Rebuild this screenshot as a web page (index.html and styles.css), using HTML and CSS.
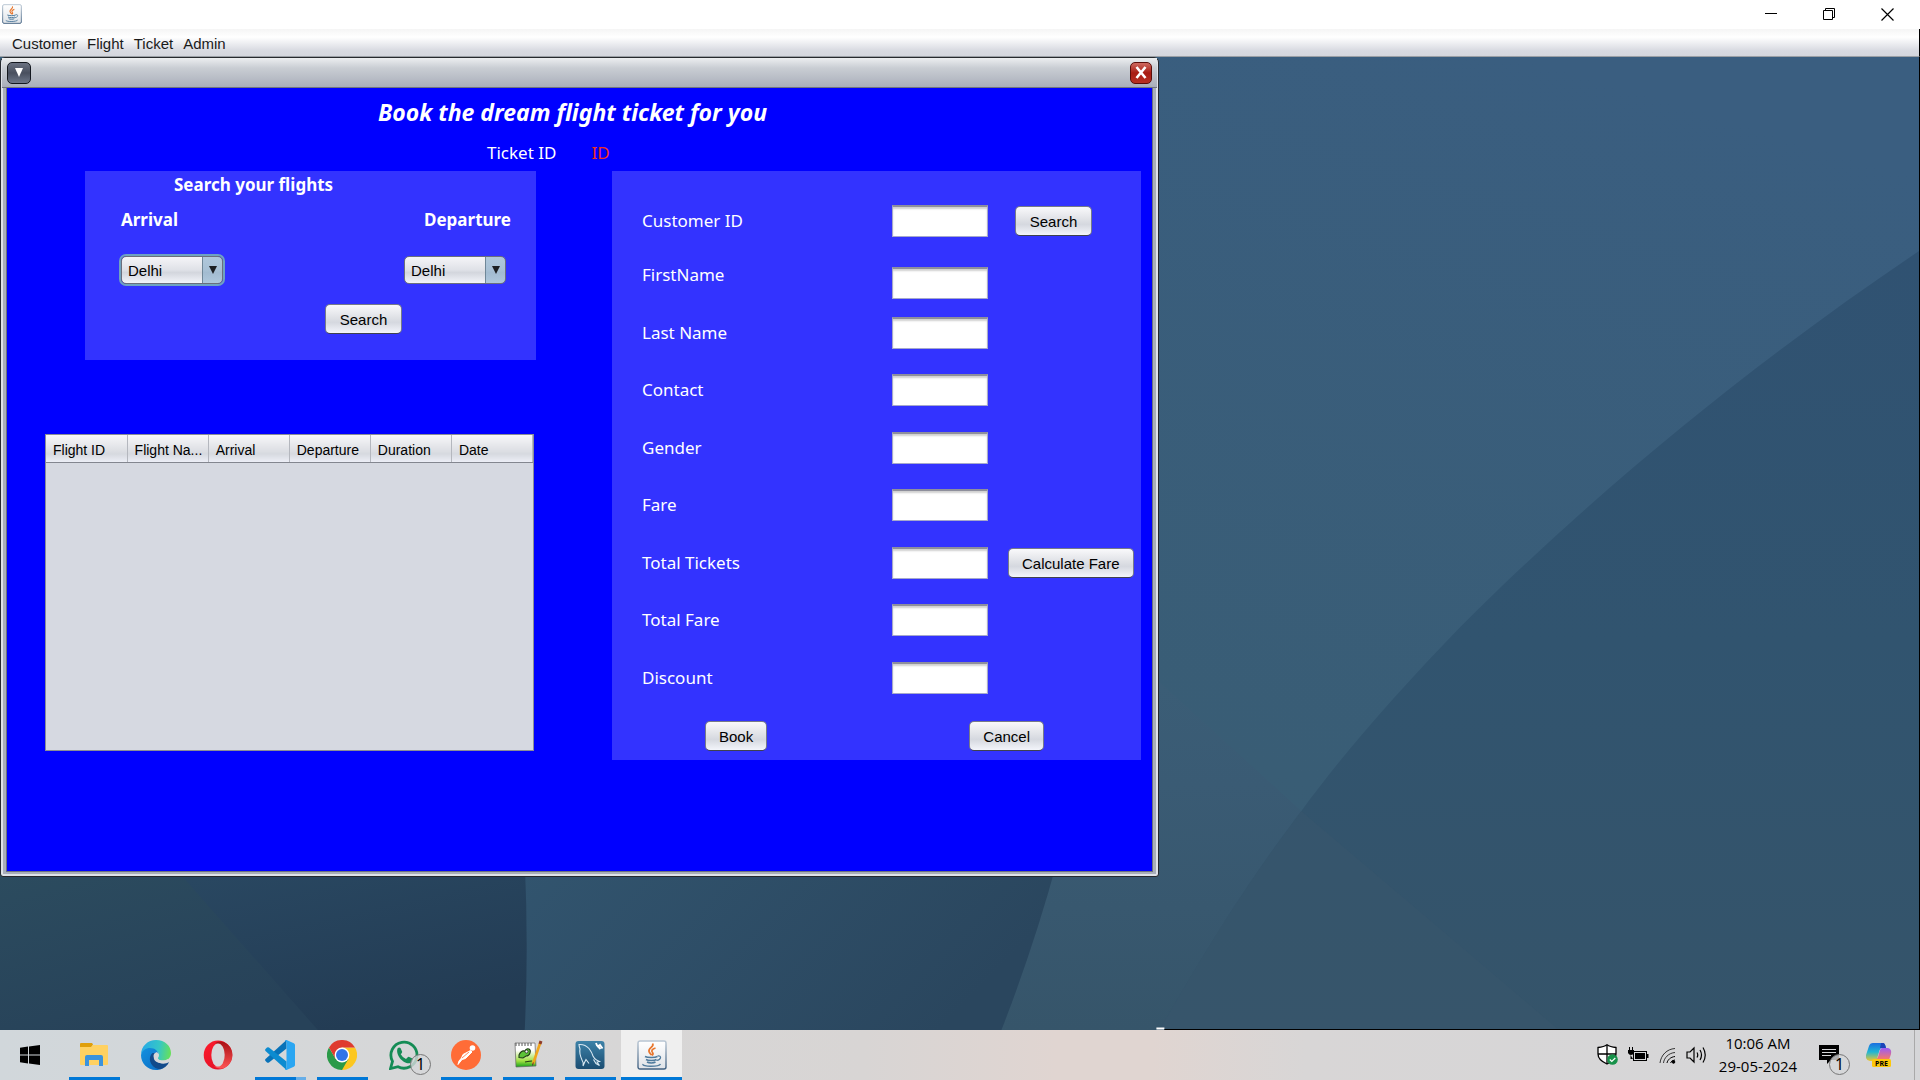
FILE: index.html
```html
<!DOCTYPE html>
<html lang="en">
<head>
<meta charset="utf-8">
<title>Flight booking</title>
<link rel="stylesheet" href="styles.css">
</head>
<body>
<svg class="defs" aria-hidden="true">
  <defs>
    <symbol id="java" viewBox="0 0 30 30">
      <linearGradient id="jg" x1="0" y1="0" x2="0" y2="1"><stop offset="0" stop-color="#b9c6d3"/><stop offset="1" stop-color="#3f5f80"/></linearGradient>
      <linearGradient id="jb" x1="0" y1="0" x2="0" y2="1"><stop offset="0" stop-color="#fff"/><stop offset="1" stop-color="#dfe3e8"/></linearGradient>
      <rect x="1" y="1" width="28" height="28" rx="2" fill="url(#jb)" stroke="url(#jg)" stroke-width="1.4"/>
      <path d="M15.500 3.500c2.500 3-4.500 4.500-3.500 8 .5 1.700 2 2.300 2.500 3.800M18.500 8c-3.500 1-4.500 3-3 4.500 1 1 .5 2-.5 3" fill="none" stroke="#e8762d" stroke-width="1.700"/>
      <g fill="none" stroke="#4f7b9d" stroke-width="1.500">
        <path d="M8 16.500c2.500 1.300 10 1.300 12.500 0M9 19.500c2 1.300 8.500 1.300 10.500 0M10 22c2 1.200 6.500 1.200 8.500 0"/>
        <path d="M20.500 16c4.500-1 4 4-1 4.500" stroke-width="1.200"/>
        <path d="M6 24c-1.500 3 16 3 17.500 0" stroke-width="1.400"/>
      </g>
    </symbol>
  </defs>
</svg>

<header class="titlebar">
  <svg class="app-icon" viewBox="0 0 30 30"><use href="#java"/></svg>
  <div class="window-controls">
    <button type="button" aria-label="Minimize"><svg width="13" height="13" viewBox="0 0 13 13"><path d="M0 5.500h12" stroke="#000"/></svg></button>
    <button type="button" aria-label="Restore"><svg width="13" height="13" viewBox="0 0 13 13"><path d="M.5 2.500h9v9h-9zM2.500 2.500v-2h9v9h-2" fill="none" stroke="#000"/></svg></button>
    <button type="button" aria-label="Close"><svg width="13" height="13" viewBox="0 0 13 13"><path d="M.5.5l12 12M12.500.5l-12 12" stroke="#000" stroke-width="1.200"/></svg></button>
  </div>
</header>

<nav class="menubar" aria-label="Application">
  <button type="button">Customer</button>
  <button type="button">Flight</button>
  <button type="button">Ticket</button>
  <button type="button">Admin</button>
</nav>

<main class="desktop">
  <svg class="wallpaper" viewBox="0 57 1920 973" preserveAspectRatio="none" aria-hidden="true">
    <defs>
      <linearGradient id="w1" x1=".8" y1="0" x2=".2" y2="1"><stop offset="0" stop-color="#3a5e80"/><stop offset=".6" stop-color="#395d75"/><stop offset="1" stop-color="#395b6d"/></linearGradient>
      <linearGradient id="w2" x1="0" y1="0" x2="0" y2="1"><stop offset="0" stop-color="#305272"/><stop offset=".5" stop-color="#31546f"/><stop offset="1" stop-color="#35546a"/></linearGradient>
      <linearGradient id="w3" x1="0" y1="0" x2="0" y2="1"><stop offset="0" stop-color="#3c6079"/><stop offset=".5" stop-color="#3a5b74"/><stop offset="1" stop-color="#36556a"/></linearGradient>
      <linearGradient id="w4" x1="0" y1="0" x2="1" y2=".3"><stop offset="0" stop-color="#32556f"/><stop offset="1" stop-color="#2a465e"/></linearGradient>
      <linearGradient id="w5" x1="0" y1="0" x2=".5" y2="1"><stop offset="0" stop-color="#2a4963"/><stop offset="1" stop-color="#233c54"/></linearGradient>
      <linearGradient id="w6" x1="0" y1="0" x2=".5" y2="1"><stop offset="0" stop-color="#2c4c5f"/><stop offset="1" stop-color="#274259"/></linearGradient>
    </defs>
    <path d="M0 57H1920V1030H0z" fill="url(#w1)"/>
    <path d="M1000 540L1160 682 1302 811 1560 1030H900z" fill="url(#w3)"/>
    <path d="M1920 251C1770 352 1610 478 1460 628 1400 690 1345 752 1302 811 1250 880 1215 935 1160 1030H1920z" fill="url(#w2)"/>
    <path d="M1302 811L1560 1030H1160C1215 935 1250 880 1302 811z" fill="#39576d" opacity=".45"/>
    <path d="M500 860H1058Q1035 945 1002 1030H500z" fill="url(#w4)"/>
    <path d="M140 860H525Q529 950 525 1030H140z" fill="url(#w5)"/>
    <path d="M0 860H168L318 1030H0z" fill="url(#w6)"/>
    <path d="M1157 1028.500h8" stroke="#fff" stroke-width="2"/>
    <path d="M1165 1029.500H1920" stroke="#000"/>
  </svg>

  <section class="frame" aria-label="Ticket booking">
    <div class="frame-bar">
      <button type="button" class="frame-menu" aria-label="Window menu"><svg width="8" height="9" viewBox="0 0 8 9"><path d="M0 0h8L4 9z" fill="#fff"/></svg></button>
      <button type="button" class="frame-close" aria-label="Close window"><svg width="12" height="13" viewBox="0 0 12 13"><path d="M1.500 1l9 11M10.500 1l-9 11" stroke="#fff" stroke-width="2.600"/></svg></button>
    </div>
    <div class="frame-body">
      <h1>Book the dream flight ticket for you</h1>
      <p class="ticket"><span>Ticket ID</span><span class="ticket-value">ID</span></p>
      <div class="columns">
        <div class="left">
          <form class="panel search">
            <h2>Search your flights</h2>
            <div class="cities">
              <div class="city"><label for="arrival">Arrival</label>
                <span class="combo focused"><select id="arrival"><option>Delhi</option></select></span></div>
              <div class="city"><label for="departure">Departure</label>
                <span class="combo"><select id="departure"><option>Delhi</option></select></span></div>
            </div>
            <button type="button" class="btn">Search</button>
          </form>
          <div class="table-box">
            <table>
              <thead><tr><th>Flight ID</th><th>Flight Na...</th><th>Arrival</th><th>Departure</th><th>Duration</th><th>Date</th></tr></thead>
            </table>
          </div>
        </div>
        <form class="panel booking">
          <div class="row"><label for="cid">Customer ID</label><input id="cid" type="text"><button type="button" class="btn lookup">Search</button></div>
          <div class="row first"><label for="fn">FirstName</label><input id="fn" type="text"></div>
          <div class="row"><label for="ln">Last Name</label><input id="ln" type="text"></div>
          <div class="row"><label for="ct">Contact</label><input id="ct" type="text"></div>
          <div class="row"><label for="gd">Gender</label><input id="gd" type="text"></div>
          <div class="row"><label for="fa">Fare</label><input id="fa" type="text"></div>
          <div class="row"><label for="tt">Total Tickets</label><input id="tt" type="text"><button type="button" class="btn">Calculate Fare</button></div>
          <div class="row"><label for="tf">Total Fare</label><input id="tf" type="text"></div>
          <div class="row"><label for="dc">Discount</label><input id="dc" type="text"></div>
          <div class="actions"><button type="button" class="btn">Book</button><button type="button" class="btn">Cancel</button></div>
        </form>
      </div>
    </div>
  </section>
</main>

<footer class="taskbar">
  <div class="apps">
    <button type="button" class="app start" aria-label="Start"><svg width="20" height="20" viewBox="0 0 20 20"><path d="M0 2.800L8 1.600V9.500H0zM9 1.500L20 0V9.500H9zM0 10.500H8V18.400L0 17.200zM9 10.500H20V20L9 18.500z"/></svg></button>
    <button type="button" class="app open" aria-label="File Explorer"><svg width="30" height="30" viewBox="0 0 30 30"><path d="M1 4q0-1 1-1h11l1 1.500-1.500 2.500H1z" fill="#e09f0a"/><path d="M1 7h11l2-2h14q1 0 1 1v18q0 1-1 1H2q-1 0-1-1z" fill="#ffd161"/><path d="M6 26v-9q0-2 2-2h14q2 0 2 2v9h-4v-6h-10v6z" fill="#3b93dd"/></svg></button>
    <button type="button" class="app" aria-label="Edge"><svg width="30" height="30" viewBox="0 0 30 30"><defs><linearGradient id="e1" x1="0" y1=".3" x2="1" y2=".4"><stop offset="0" stop-color="#27a8e8"/><stop offset=".6" stop-color="#35c6c7"/><stop offset="1" stop-color="#66e05c"/></linearGradient><linearGradient id="e2" x1="0" y1="0" x2="1" y2="1"><stop offset="0" stop-color="#1390df"/><stop offset="1" stop-color="#0b6cc4"/></linearGradient></defs><path d="M0 15C0 6 7 0 15 0c9 0 15 6 15 13 0 5-3.500 7.500-8 7.500-4 0-5.500-1.500-5-2.500 2-3 1-7-4-8C7 9 1 11 0 15z" fill="url(#e1)"/><path d="M0 15c1-4.500 5-7 9-7 5 0 8 3 8.500 6-5-3-9 2-7 7 2 6 7 8.500 12 7-2.500 1.500-5 2-7.500 2C6 30 0 23 0 15z" fill="url(#e2)"/><path d="M11.500 13c-5 4-3 14 6 16 4 1 9-3 10.500-7-4 3-13 2-14.500-4-.4-2 .3-4 1-5z" fill="#114a8b"/><path d="M12.500 16q0-3 3.500-4 2 2 1.500 4-.8 1.500-.5 2.500.8 2 5 2 2.500 0 5-1.500l.5 2c-5 4-13 2-14.500-2z" fill="#d6d7d9"/></svg></button>
    <button type="button" class="app" aria-label="Opera"><svg width="30" height="30" viewBox="0 0 30 30"><defs><linearGradient id="o1" x1="0" y1="0" x2="1" y2="1"><stop offset="0" stop-color="#ff1b2d"/><stop offset="1" stop-color="#d80f24"/></linearGradient><linearGradient id="o2" x1="0" y1="0" x2="0" y2="1"><stop offset="0" stop-color="#a80f14"/><stop offset="1" stop-color="#ff5555"/></linearGradient></defs><ellipse cx="15" cy="15" rx="14.300" ry="14.500" fill="url(#o1)"/><path d="M12 3q7-3.500 12.500 1.200A14.300 14.500 0 0 1 24.500 26Q18 31 11 26.500 20 26 21.500 15 20 4 12 3z" fill="url(#o2)"/><ellipse cx="15" cy="15" rx="6.700" ry="11.500" fill="#d6d7d9"/></svg></button>
    <button type="button" class="app open grouped" aria-label="Visual Studio Code"><svg width="30" height="30" viewBox="0 0 30 30"><path d="M21.500 0v8.500L4 22.500q-1 .7-2 0L.500 21q-.8-1 0-2z" fill="#0872b8"/><path d="M21.500 30v-8.500L4 7.500q-1-.7-2 0L.500 9q-.8 1 0 2z" fill="#0c8bd0"/><path d="M21.500 0l7.300 3.300Q30 4 30 5v20q0 1-1.200 1.700L21.500 30q-1 .2-1.500-.5l1.500-1.500V2L20 .5q.5-.7 1.500-.5z" fill="#2aa6f2"/></svg></button>
    <button type="button" class="app open" aria-label="Chrome"><svg width="30" height="30" viewBox="0 0 30 30"><path d="M28 7.500A15 15 0 0 1 15 30L15 15 15 7.500z" fill="#fcc720"/><path d="M15 30A15 15 0 0 1 2 7.500L8.500 18.700 21.500 18.700z" fill="#2a9a48"/><path d="M15 7.500H28A15 15 0 0 0 2 7.500L8.500 18.700z" fill="#df3b2f"/><circle cx="15" cy="15" r="7.400" fill="#fff"/><circle cx="15" cy="15" r="6" fill="#2f74e8"/></svg></button>
    <button type="button" class="app" aria-label="WhatsApp, 1 new"><svg width="30" height="30" viewBox="0 0 30 30"><path d="M1.500 28.500l2-7.200A13 13 0 1 1 9 26.700z" fill="none" stroke="#158c55" stroke-width="2.800"/><path d="M8.500 8.500q1.500-1.700 3-.5l1.700 3.700q0 1-1.500 2.500 2 3.500 5.300 4.800l2-2q.7-.3 1.300 0l3.500 1.800q1 3.700-3.500 4.500c-6 .5-14-8-11.800-14.800z" fill="#158c55"/></svg><span class="count">1</span></button>
    <button type="button" class="app open" aria-label="Postman"><svg width="30" height="30" viewBox="0 0 30 30"><circle cx="15" cy="15" r="15" fill="#ff6c37"/><circle cx="21.500" cy="8" r="2.800" fill="#fff"/><path d="M19.500 10.500l1.500 1.500-6.500 6.500-3.500 1-4 5 1-3.500 2.500-3 1.500-3.500z" fill="#fff" stroke="#fff" stroke-linejoin="round"/><path d="M11 18l7-6" stroke="#ff6c37" stroke-width=".8"/></svg></button>
    <button type="button" class="app open" aria-label="Notepad++"><svg width="30" height="30" viewBox="0 0 30 30"><defs><linearGradient id="n1" x1="0" y1="0" x2="0" y2="1"><stop offset=".3" stop-color="#fff"/><stop offset=".75" stop-color="#9fe040"/><stop offset="1" stop-color="#14a01c"/></linearGradient></defs><path d="M2 3h20l1 23-20 1z" fill="url(#n1)" stroke="#666" stroke-width=".7"/><path d="M3 3v3M6 3v3M9 3v3M12 3v3M15 3v3M18 3v3" stroke="#555"/><path d="M6 15q2-5 6-4 1-3 4-2 2 1 1 4-1 3-4 3l-3 2-4-.5z" fill="#5cc238" stroke="#223c18" stroke-width="1.100"/><path d="M12 22q5-1 7-1" stroke="#223c18" stroke-width="1.100"/><circle cx="13.500" cy="11.500" r="1.500" fill="#fff" stroke="#111" stroke-width=".7"/><path d="M27.500 2L20 24" stroke="#f0a61a" stroke-width="2.600"/><path d="M28 1l-1 3" stroke="#8e3b2a" stroke-width="3"/><path d="M20.300 22.500l-.8 3" stroke="#533"/></svg></button>
    <button type="button" class="app open" aria-label="MySQL Workbench"><svg width="30" height="30" viewBox="0 0 30 30"><defs><linearGradient id="m1" x1="0" y1="0" x2="0" y2="1"><stop offset="0" stop-color="#3d82a8"/><stop offset="1" stop-color="#1b4d72"/></linearGradient></defs><rect x=".5" y="1" width="29" height="28" rx="3" fill="url(#m1)"/><path d="M8 26q1-3-1-6-3-7-2-11-1-3-1-4.500 6-.5 10 4 3 4 4 7.500 1.500 3 3.500 4l3 1.500-2.500.5 2.500 3.500-3.500-2-2.500-4M8 26l1.500-3.500 1.500-3 3 4" fill="none" stroke="#d9e8f2" stroke-width="1.100"/><path d="M21 3l1 2.500 2 .5 1-1 2.500 3.500M22.500 6l3 3" stroke="#fff" stroke-width="1.900" fill="none"/></svg></button>
    <button type="button" class="app open active" aria-label="Java application"><svg width="30" height="30" viewBox="0 0 30 30"><use href="#java"/></svg></button>
  </div>
  <div class="tray">
    <svg width="21" height="22" viewBox="0 0 21 22"><path d="M10 .8Q13 3 19 3.500V10q0 6-9 10Q1 16 1 10V3.500Q7 3 10 .8z" fill="#fff" stroke="#000" stroke-width="1.300"/><path d="M10 1v19M1 10h18" stroke="#000" stroke-width="1.300"/><circle cx="15.500" cy="15.500" r="5.300" fill="#17924a"/><path d="M12.800 15.500l2 2 3.500-3.500" fill="none" stroke="#fff" stroke-width="1.200"/></svg>
    <svg width="21" height="16" viewBox="0 0 21 16"><rect x="5.500" y="4.500" width="13" height="9" stroke="#000" fill="#d6d7d9"/><path d="M7 6h10v6H7zM19 7h1.500v4H19zM0 3h6v3q-1 2-3 2t-3-2zM1 0h1v3H1zM4 0h1v3H4zM2.500 8v4H5" fill="#000"/></svg>
    <svg width="17" height="17" viewBox="0 0 17 17" fill="none" stroke="#000"><path d="M1 16C2 8 8 2 16 1.500M4.500 16C5 11 9.500 6 16 5.500" opacity=".75"/><path d="M8 16C8.500 13 11.500 10 16 9.500M11.500 16q1-3 4.500-3"/><circle cx="14.500" cy="15" r="1.300" fill="#000"/></svg>
    <svg width="21" height="18" viewBox="0 0 21 18" fill="none" stroke="#000" stroke-width="1.200"><path d="M1 6h3l4-4v14l-4-4H1z"/><path d="M11 6.500q1.500 2.500 0 5M14 4q3 5 0 10M17 1.500q4.500 7.500 0 15"/></svg>
    <div class="clock"><time>10:06 AM</time><time datetime="2024-05-29">29-05-2024</time></div>
    <button type="button" class="notes" aria-label="Notifications, 1 new"><svg width="20" height="19" viewBox="0 0 20 19"><path d="M0 0h20v15h-8l-4 4v-4H0z"/><path d="M3 4.500h14M3 7.500h14M3 10.500h9" stroke="#d6d7d9"/></svg><span class="count">1</span></button>
    <svg class="copilot" width="26" height="26" viewBox="0 0 26 26"><defs><linearGradient id="c1" x1="0" y1="0" x2="0" y2="1"><stop offset="0" stop-color="#1b6fe0"/><stop offset=".5" stop-color="#1fb6d5"/><stop offset="1" stop-color="#f0c62c"/></linearGradient><linearGradient id="c2" x1="0" y1="0" x2="0" y2="1"><stop offset="0" stop-color="#9a5cf5"/><stop offset="1" stop-color="#ff7a5c"/></linearGradient></defs><path d="M7 1h10q2 0 3 5h-4q-2 0-3 4l-2 7q-1 2-3 2H4q-5-1-4-6L3 4q1-3 4-3z" fill="url(#c1)"/><path d="M15 1h2q2 0 3 5h-6z" fill="#1c44b8"/><path d="M16 6h6q4 1 3 6l-2 6H10l2-3 2-7q1-2 2-2z" fill="url(#c2)"/><rect x="6" y="17" width="19" height="8" rx="1.500" fill="#fdc80a"/><text x="15.500" y="23.700" text-anchor="middle" class="pre">PRE</text></svg>
    <span class="show-desktop"></span>
  </div>
</footer>
</body>
</html>
```
FILE: styles.css
```css
* { box-sizing: border-box; }

body {
  margin: 0;
  min-height: 100vh;
  display: flex;
  flex-direction: column;
  font: 15px/20px "Liberation Sans", Arial, sans-serif;
  color: #000;
}

h1, h2, p { margin: 0; }
button { font: inherit; color: inherit; border: 0; background: none; padding: 0; }
svg { display: block; }
.defs { position: absolute; width: 0; height: 0; }

.titlebar {
  height: 29px;
  background: #fff;
  display: flex;
  justify-content: space-between;
}
.app-icon { width: 20px; height: 20px; margin: 4px 2px; }
.window-controls { display: flex; padding-right: 4px; }
.window-controls button {
  width: 58px;
  height: 29px;
  display: grid;
  place-items: center;
}

.menubar {
  height: 28px;
  padding: 2px 12px 0;
  display: flex;
  gap: 10px;
  background: linear-gradient(#f5f5f5, #fff 30%, #d8dae1 80%, #d4d6dd);
  border-bottom: 1px solid #9a9fa5;
  border-right: 1px solid #000;
  color: #1a1a1a;
}

.desktop {
  flex: 1;
  position: relative;
  display: flex;
  align-items: flex-start;
  border-right: 1px solid #000;
  background: #395c72;
}
.wallpaper { position: absolute; inset: 0; width: 100%; height: 100%; }

.frame {
  position: relative;
  width: 1159px;
  max-width: 100%;
  padding: 0 5px 4px;
  border: 1px solid #26292e;
  border-radius: 5px 5px 3px 3px;
  background: #a9aeb9;
  box-shadow: inset 0 0 0 2px #dfe2e8;
}
.frame-bar {
  height: 30px;
  margin: 0 -4px;
  padding: 0 5px;
  display: flex;
  align-items: center;
  justify-content: space-between;
  background: linear-gradient(#eceef0, #c9cdd3 35%, #a9aeba);
  border-bottom: 1px solid #70757f;
}
.frame-bar button { height: 22px; display: grid; place-items: center; border-radius: 5px; }
.frame-menu { width: 24px; border: 1px solid #14181f; background: linear-gradient(#6b7282, #49505f 50%, #6d7688); }
.frame-close { width: 22px; border: 1px solid #5b0e0a; background: linear-gradient(#cf6a60, #a81c12 50%, #b83023); }

.frame-body {
  min-height: 784px;
  padding: 7px 11px 0 38px;
  border: 1px solid #6c727f;
  border-top: 0;
  background: #00f;
  color: #fff;
  font: 17px/24px "Noto Sans", "Open Sans", sans-serif;
}
h1 { font: italic bold 23px/34px "Noto Sans", "Open Sans", sans-serif; padding-left: 333px; }
.ticket { display: flex; gap: 35px; padding-left: 442px; margin: 12px 0 6px; }
.ticket-value { color: #f03020; }

.columns { display: grid; grid-template-columns: 491px 1fr; column-gap: 76px; align-items: start; }
.panel { background: #33f; }

.search { height: 189px; margin: 0 0 74px 40px; width: 451px; padding: 2px 25px 0 36px; }
.search h2 { font-size: 17px; line-height: 24px; padding-left: 53px; }
.cities { display: flex; justify-content: space-between; margin-top: 11px; }
.city { display: flex; flex-direction: column; gap: 24px; font-weight: bold; }
.city:last-child label { padding-left: 20px; }
.search .btn { display: block; margin: 20px 0 0 204px; }

.combo {
  position: relative;
  display: block;
  width: 102px;
  height: 28px;
  border: 1px solid #6b6f7c;
  border-radius: 5px;
  background: linear-gradient(90deg, transparent 80px, #6f8798 80px, #6f8798 81px, transparent 81px),
    linear-gradient(90deg, transparent 81px, rgba(130, 170, 200, .6) 81px),
    linear-gradient(#f5f5f8, #dfe1e7 50%, #d3d6dd 60%, #f2f4fa);
}
.combo.focused { box-shadow: 0 0 0 2px #6fa3c0; }
.combo select {
  appearance: none;
  width: 100%;
  height: 26px;
  padding: 2px 6px 0;
  border: 0;
  background: none;
  font: 15px/20px "Liberation Sans", Arial, sans-serif;
  color: #000;
  outline: none;
}
.combo::after {
  content: "";
  position: absolute;
  right: 5px;
  top: 9px;
  border: 4px solid transparent;
  border-top: 8px solid #1c1f22;
  border-bottom: 0;
}

.btn {
  height: 30px;
  padding: 2px 13px 0;
  border: 1px solid #777b88;
  border-bottom-color: #3f424e;
  border-radius: 5px;
  background: linear-gradient(#f9f9fb, #dfe1e6 45%, #d5d8df 62%, #f3f5fb);
  font: 15px/20px "Liberation Sans", Arial, sans-serif;
  color: #000;
  white-space: nowrap;
}
.search .btn, .row .btn { min-width: 77px; }

.table-box { height: 317px; border: 1px solid #8a8e96; background: #d6d9e1; width: 489px; }
table { width: 100%; table-layout: fixed; border-collapse: collapse; }
th {
  height: 27px;
  padding: 3px 0 0 7px;
  overflow: hidden;
  white-space: nowrap;
  text-align: left;
  font: 14px/20px "Liberation Sans", Arial, sans-serif;
  color: #000;
  background: linear-gradient(#f7f7f9, #dcdee3 60%, #d6d9df 70%, #eceef6);
  border-right: 1px solid #b4b7be;
  border-bottom: 1px solid #83868f;
}

.booking { min-height: 589px; padding: 34px 9px 0 30px; }
.row {
  display: grid;
  grid-template-columns: 250px 96px 1fr;
  align-items: center;
  height: 32px;
  margin-bottom: 26px;
}
.row:nth-child(odd) { margin-bottom: 25px; }
.row .btn { justify-self: start; margin-left: 20px; }
.row .lookup { margin-left: 27px; }
.row.first { margin: 30px 0 18px; }
.row.first label { align-self: start; margin-top: -4px; }
.row input {
  width: 96px;
  height: 32px;
  padding: 4px 6px;
  border: 1px solid #a5a8cc;
  border-top: 2px solid #8e8f9c;
  background: #fff;
  box-shadow: inset 0 2px 2px #d0d0d0;
  font: 15px/20px "Liberation Sans", Arial, sans-serif;
}
.actions { display: flex; justify-content: space-between; padding: 2px 88px 0 63px; }

.taskbar {
  height: 50px;
  display: flex;
  justify-content: space-between;
  background: linear-gradient(90deg, #d1d7db, #d6d7d8 20%, #d8d5d4 45%, #e0d5d1 55%, #e0d5d1 60%, #d8d6d6 68%, #d5d6d8);
}
.apps { display: flex; }
.app {
  position: relative;
  width: 61px;
  margin-right: 1px;
  display: grid;
  place-items: center;
}
.app.start { width: 60px; margin-right: 3px; }
.app.open::after {
  content: "";
  position: absolute;
  left: 6px;
  right: 4px;
  bottom: 0;
  height: 3px;
  background: #0078d7;
}
.app.grouped::after { background: linear-gradient(90deg, #0078d7 41px, #66aee8 41px); }
.app.active { background: #efefef; }
.app.active::after { left: 0; right: 0; }
.count {
  position: absolute;
  left: 37px;
  top: 24px;
  width: 21px;
  height: 21px;
  border: 1px solid #777;
  border-radius: 50%;
  background: rgba(214, 215, 217, .8);
  font: 16px/19px "Noto Sans", sans-serif;
  text-align: center;
}

.tray { display: flex; align-items: center; }
.tray > svg { margin-right: 10px; }
.clock {
  display: flex;
  flex-direction: column;
  align-items: center;
  width: 78px;
  margin: 0 6px 0 2px;
  font: 15px/23px "Open Sans", "Noto Sans", sans-serif;
  white-space: nowrap;
}
.notes { position: relative; width: 46px; height: 50px; padding: 15px 0 0 16px; display: grid; place-items: start; }
.notes .count { left: 26px; }
.tray .copilot { margin: 0 22px 0 17px; }
.pre { font: bold 7px "Noto Sans", sans-serif; }
.show-desktop { width: 6px; height: 50px; border-left: 1px solid #a9a9a9; }
```
